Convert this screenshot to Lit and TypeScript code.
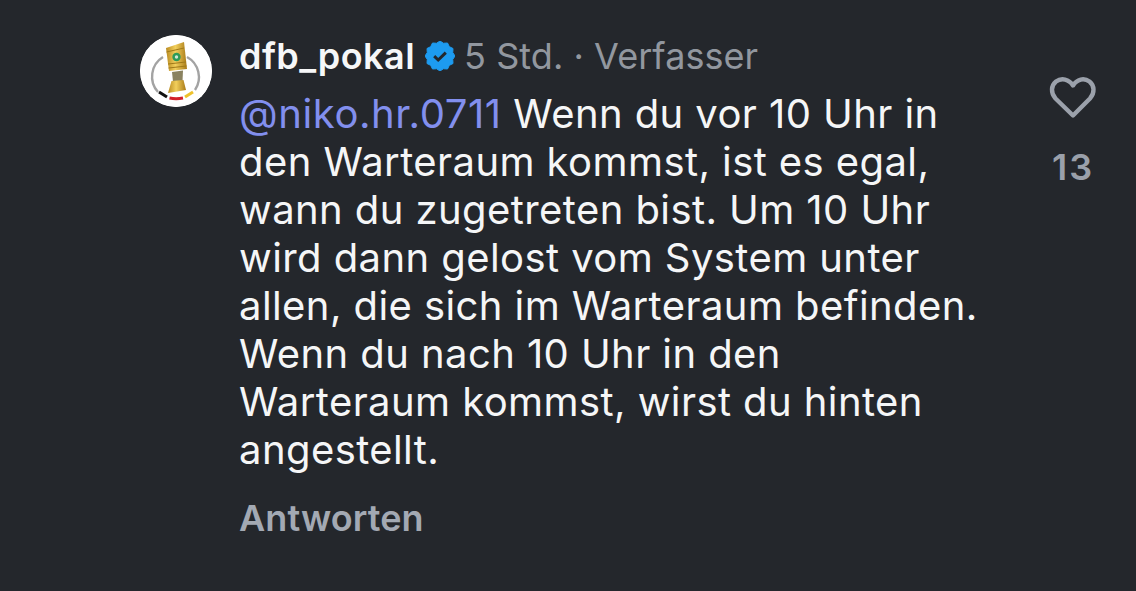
import { LitElement, html, css, svg } from "lit";
import { customElement } from "lit/decorators.js";

const badgePoints = () => {
  const pts: string[] = [];
  const n = 24;
  for (let i = 0; i < n; i++) {
    const r = i % 2 === 0 ? 15 : 13.2;
    const a = (i / n) * Math.PI * 2;
    pts.push(`${(15 + r * Math.cos(a)).toFixed(2)},${(15 + r * Math.sin(a)).toFixed(2)}`);
  }
  return pts.join(" ");
};

@customElement("app-root")
export class AppRoot extends LitElement {
  static styles = css`
    :host { display: block; width: 1136px; height: 591px; background: #24272c; overflow: hidden; font-family: Inter, "Liberation Sans", sans-serif; }
    .row { display: flex; padding: 35px 39px 0 140px; }
    .avatar { width: 72px; height: 72px; border-radius: 50%; background: #fff; flex: none; display: block; }
    .main { margin-left: 27px; width: 760px; }
    .head { display: flex; align-items: center; height: 44px; margin-top: -1px; white-space: nowrap; }
    .name { font-weight: 600; color: #f6f7f8; font-size: 36px; line-height: 44px; letter-spacing: 0.45px; }
    .badge { width: 30px; height: 30px; margin: 0 9px 0 10px; display: block; }
    .meta { color: #92979f; font-size: 36px; line-height: 44px; letter-spacing: 0.05px; }
    .text { margin: 12px 0 0; font-size: 40px; line-height: 48px; color: #f5f6f7; letter-spacing: 0.42px; font-weight: 400; }
    .mention { color: #828fee; letter-spacing: 0.6px; }
    .reply { margin-top: 22px; font-size: 36px; font-weight: 600; line-height: 44px; color: #a3a9b3; letter-spacing: 0.1px; }
    .like { margin-left: auto; width: 48px; display: flex; flex-direction: column; align-items: center; padding-top: 40px; color: #9ba1ab; }
    .heart { width: 48px; height: 44px; display: block; }
    .count { margin-top: 26px; font-size: 36px; font-weight: 600; line-height: 44px; color: #9aa0aa; letter-spacing: 2px; }
  `;

  render() {
    return html`<div class="row">
      <svg class="avatar" viewBox="0 0 72 72">
        <circle cx="36" cy="36" r="36" fill="#fff"/>
        <path d="M23 22 A 23 23 0 0 0 18 57" fill="none" stroke="#a3a3a3" stroke-width="2.4"/>
        <path d="M47 22 A 23 23 0 0 1 55 55" fill="none" stroke="#a3a3a3" stroke-width="2.4"/>
        <path d="M19 57 L27 62" stroke="#111" stroke-width="3" fill="none"/>
        <path d="M29.5 63 Q36 64.4 43 63" stroke="#d2202a" stroke-width="3" fill="none"/>
        <path d="M45 62 L53 57" stroke="#eec22c" stroke-width="3" fill="none"/>
        <defs>
          <linearGradient id="g" x1="0" x2="1"><stop offset="0" stop-color="#b98b22"/><stop offset=".45" stop-color="#f2cf5c"/><stop offset="1" stop-color="#a87a18"/></linearGradient>
        </defs>
        <path d="M26 13 L44 7 L47 34 L29 36 Z" fill="url(#g)"/>
        <path d="M26.5 17 L44 13 M28 29 L46 27 M28.5 33 L46.5 31" stroke="#a07a1a" stroke-width="1"/>
        <circle cx="36.5" cy="22" r="4.2" fill="#2e9a58"/>
        <circle cx="36.5" cy="22" r="1.7" fill="#cfe8d8"/>
        <path d="M32 37 L43 35.5 L42.5 46 L33 46.5 Z" fill="#8a8260"/>
        <path d="M31.5 46 L43.5 45 L46 55 L28 58 Z" fill="url(#g)"/>
      </svg>
      <div class="main">
        <div class="head">
          <span class="name">dfb_pokal</span>
          <svg class="badge" viewBox="0 0 30 30">
            ${svg`<polygon points="${badgePoints()}" fill="#1d9bf0" stroke="#1d9bf0" stroke-width="1" stroke-linejoin="round"/>`}
            <path d="M9.2 15.2 L13.2 19 L20.8 11.6" fill="none" stroke="#24272c" stroke-width="3"/>
          </svg>
          <span class="meta">5 Std. · Verfasser</span>
        </div>
        <p class="text"><span class="mention">@niko.hr.0711</span> Wenn du vor 10 Uhr in<br>den Warteraum kommst, ist es egal,<br>wann du zugetreten bist. Um 10 Uhr<br>wird dann gelost vom System unter<br>allen, die sich im Warteraum befinden.<br>Wenn du nach 10 Uhr in den<br>Warteraum kommst, wirst du hinten<br>angestellt.</p>
        <div class="reply">Antworten</div>
      </div>
      <div class="like">
        <svg class="heart" viewBox="0 0 48 44">
          <path d="M24 40.5 L6.5 23.5 C1.5 18 2 10.5 7 6.5 C12.5 2.5 20 4 24 10.5 C28 4 35 2.5 40.5 6.5 C45.5 10.5 46 18 41 23.5 Z" fill="none" stroke="currentColor" stroke-width="4.4" stroke-linejoin="round"/>
        </svg>
        <div class="count">13</div>
      </div>
    </div>`;
  }
}
